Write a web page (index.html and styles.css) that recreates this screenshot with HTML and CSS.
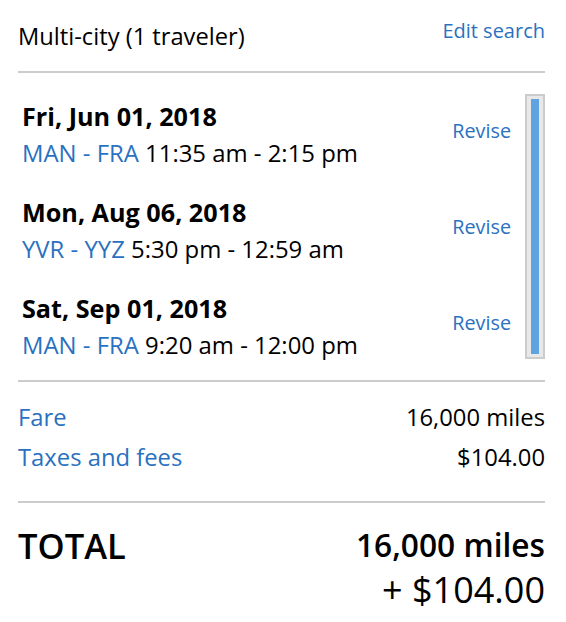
FILE: index.html
```html
<!DOCTYPE html>
<html lang="en">
<head>
<meta charset="utf-8">
<title>Trip summary</title>
<link rel="stylesheet" href="styles.css">
</head>
<body>
<div class="panel">
  <header class="head">
    <h1 class="title">Multi-city (1 traveler)</h1>
    <a class="link edit">Edit search</a>
  </header>
  <hr class="rule">
  <section class="trips">
    <ul class="trip-list">
      <li class="trip">
        <div class="trip-info">
          <div class="date">Fri, Jun 01, 2018</div>
          <div class="route"><span class="link">MAN - FRA</span> 11:35 am - 2:15 pm</div>
        </div>
        <a class="link revise">Revise</a>
      </li>
      <li class="trip">
        <div class="trip-info">
          <div class="date">Mon, Aug 06, 2018</div>
          <div class="route"><span class="link">YVR - YYZ</span> 5:30 pm - 12:59 am</div>
        </div>
        <a class="link revise">Revise</a>
      </li>
      <li class="trip">
        <div class="trip-info">
          <div class="date">Sat, Sep 01, 2018</div>
          <div class="route"><span class="link">MAN - FRA</span> 9:20 am - 12:00 pm</div>
        </div>
        <a class="link revise">Revise</a>
      </li>
    </ul>
    <div class="scrollbar"><div class="thumb"></div></div>
  </section>
  <hr class="rule">
  <section class="fees">
    <div class="fee-row"><span class="link">Fare</span><span>16,000 miles</span></div>
    <div class="fee-row"><span class="link">Taxes and fees</span><span>$104.00</span></div>
  </section>
  <hr class="rule rule-total">
  <section class="total">
    <div class="total-label">TOTAL</div>
    <div class="total-amount">
      <div class="total-miles">16,000 miles</div>
      <div class="total-cash">+ $104.00</div>
    </div>
  </section>
</div>
</body>
</html>
```

FILE: styles.css
```css
* { box-sizing: border-box; }
html, body { margin: 0; padding: 0; background: #fff; }
body {
  font-family: "Open Sans", "Liberation Sans", sans-serif;
  color: #000;
}
.panel {
  width: 566px;
  padding: 0 21px 0 18px;
}
.link { color: #2a71c0; text-decoration: none; }
.head {
  display: flex;
  justify-content: space-between;
  align-items: flex-start;
  height: 71px;
}
.title {
  margin: 21px 0 0;
  font-size: 23.7px;
  font-weight: 400;
  line-height: 30px;
}
.edit {
  margin-top: 17px;
  font-size: 20px;
  line-height: 28px;
}
.rule {
  margin: 0;
  border: 0;
  height: 2px;
  background: #cccccc;
}
.trips {
  display: flex;
  margin: 21px 0;
  height: 265px;
}
.trip-list {
  list-style: none;
  margin: 0;
  padding: 7px 0 0 4px;
  flex: 1;
  display: flex;
  flex-direction: column;
  gap: 29px;
}
.trip {
  display: flex;
  justify-content: space-between;
  align-items: flex-start;
  padding-right: 14px;
}
.trip-info { display: flex; flex-direction: column; gap: 7px; }
.date {
  font-size: 25.2px;
  font-weight: 700;
  line-height: 30px;
}
.route {
  font-size: 23.9px;
  line-height: 30px;
}
.revise {
  margin-top: 16px;
  font-size: 19.8px;
  line-height: 28px;
}
.scrollbar {
  width: 20px;
  height: 265px;
  border: 2px solid #cccccc;
  background: #e8e8e8;
  padding: 3px 4px;
}
.thumb {
  height: 100%;
  background: #5fa4e0;
}
.fees {
  padding: 20px 0 29px;
  display: flex;
  flex-direction: column;
  gap: 10px;
}
.fee-row {
  display: flex;
  justify-content: space-between;
  font-size: 23.8px;
  line-height: 30px;
}
.total {
  display: flex;
  justify-content: space-between;
  align-items: flex-start;
  padding-top: 19px;
}
.total-label {
  margin-top: 4px;
  font-size: 34.5px;
  font-weight: 600;
  line-height: 40px;
}
.total-amount { text-align: right; }
.total-miles {
  font-size: 31.7px;
  font-weight: 600;
  line-height: 45px;
}
.total-cash {
  font-size: 36px;
  line-height: 45px;
}
```
